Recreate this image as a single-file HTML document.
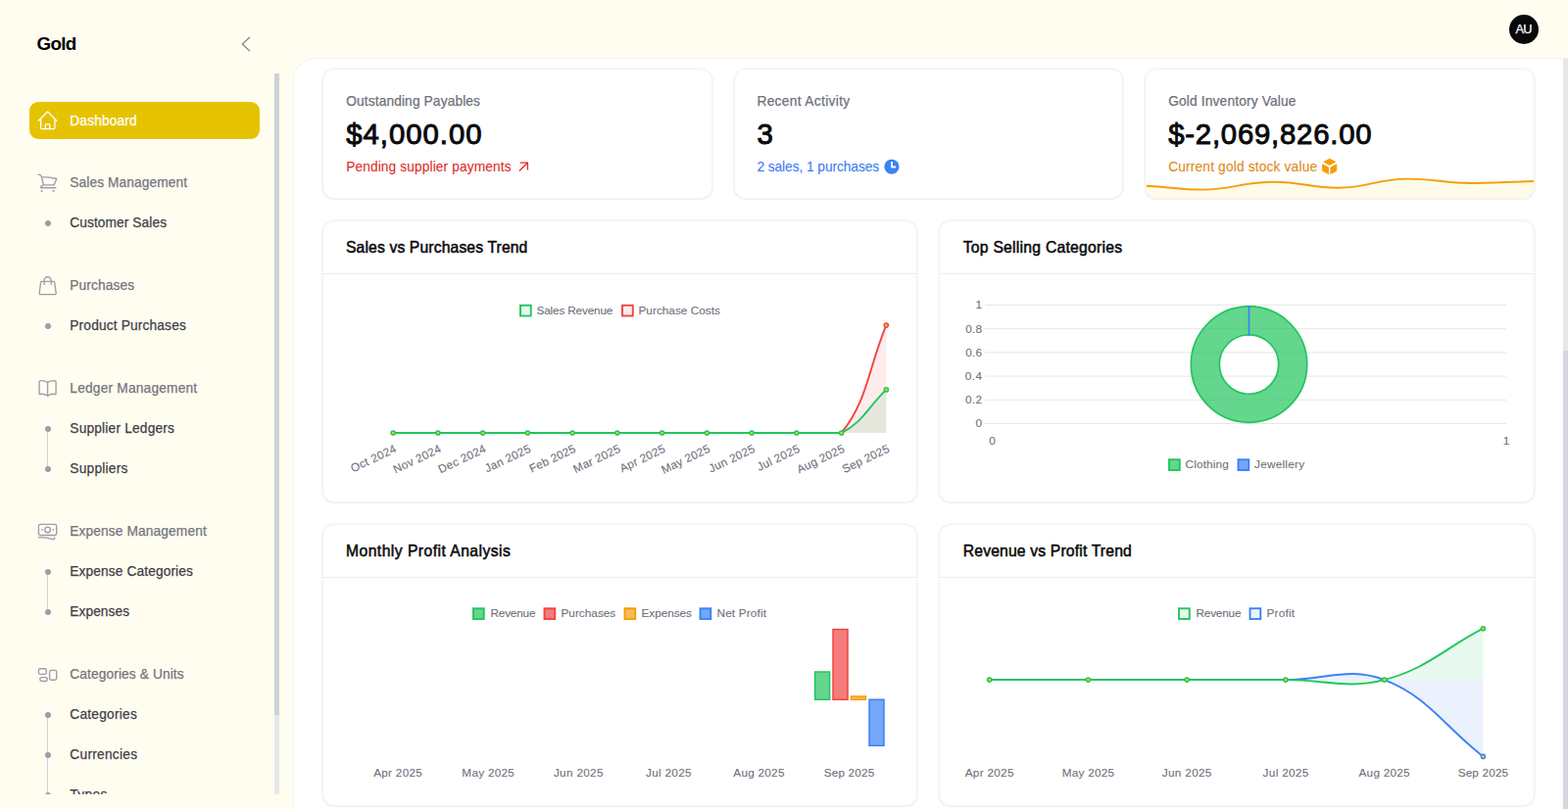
<!DOCTYPE html>
<html lang="en"><head><meta charset="utf-8"><title>Gold - Dashboard</title><style>
*{box-sizing:border-box;margin:0;padding:0}
html,body{width:1600px;height:826px;overflow:hidden}
body{background:#fffdf0;font-family:"Liberation Sans", sans-serif;position:relative;-webkit-font-smoothing:antialiased}
.t{position:absolute;white-space:nowrap;display:block;line-height:1}
.t i{display:inline-block;width:0;height:40px}
.abs{position:absolute}
.sidebar{position:absolute;left:0;top:0;width:299px;height:826px;overflow:hidden}
.active{position:absolute;left:30px;top:104px;width:235px;height:38px;border-radius:9px;background:#e6c300;box-shadow:0 0 0 1px rgba(255,255,255,0.85)}
.dot{position:absolute;width:6px;height:6px;border-radius:50%;background:#9c9dab;left:45.5px}
.vline{position:absolute;width:1px;background:#cfd0d9;left:48px}
.track{position:absolute;left:280px;top:75px;width:4.5px;height:736px;background:#e5e7eb}
.thumb{position:absolute;left:280px;top:75px;width:4.5px;height:655px;background:#cdd1d9}
.main{position:absolute;left:299px;top:59px;width:1301px;height:768px;background:#fff;border-top-left-radius:23px;border:1px solid #f3f3ee;border-right:0;border-bottom:0;overflow:hidden}
.mtrack{position:absolute;left:1595px;top:60px;width:5px;height:766px;background:#e5e7eb}
.mthumb{position:absolute;left:1595px;top:358px;width:5px;height:468px;background:#d4d7de}
.card{position:absolute;background:#fff;border:1px solid #f8f5df;border-radius:12px;box-shadow:0 0 0 1px rgba(30,30,70,0.03),0 1px 2px rgba(40,40,80,0.045);overflow:hidden}
.hr{position:absolute;left:0;right:0;height:1px;background:#ececec}
.avatar{position:absolute;left:1540px;top:15px;width:30px;height:30px;border-radius:50%;background:#09090b}
svg{position:absolute;overflow:visible}
svg text{font-family:"Liberation Sans", sans-serif}
</style></head><body>
<aside class="sidebar">
<span class="t" id="t1" style="top:11.30px;font-size:18.81px;font-weight:700;color:#000;letter-spacing:-0.677px;left:37.5px;"><i></i>Gold</span>
<svg style="left:244px;top:36px" width="14" height="18" viewBox="0 0 14 18"><path d="M10.6 2.2 L3.2 9 L10.6 15.8" fill="none" stroke="#85858f" stroke-width="1.3" stroke-linecap="round" stroke-linejoin="round"/></svg>
<div class="track"></div><div class="thumb"></div>
<div class="active"></div>
<svg style="left:38px;top:113px" width="21" height="21" viewBox="0 0 21 21"><g transform="translate(0.5 0.30)" fill="none" stroke="#fff" stroke-width="1.35" stroke-linecap="round" stroke-linejoin="round"><path d="M0.9 9.9 L10.1 0.8 L19.3 9.9"/><path d="M3.1 8 V17 Q3.1 18.3 4.4 18.3 H16.1 Q17.4 18.3 17.4 17 V8"/><path d="M7.8 18.3 V14.4 Q7.8 13.6 8.6 13.6 H11.5 Q12.3 13.6 12.3 14.4 V18.3"/></g></svg>
<span class="t" id="t2" style="top:88.00px;font-size:13.72px;font-weight:400;color:#fff;letter-spacing:0.156px;-webkit-text-stroke:0.25px;left:71.3px;"><i></i>Dashboard</span>
<nav class="abs" style="left:0;top:75px;width:279px;height:736px;overflow:hidden"><div class="abs" style="left:0;top:-75px;width:279px;height:900px">
<svg style="left:38px;top:177px" width="21" height="21" viewBox="0 0 21 21"><g transform="translate(0.5 0.30)" fill="none" stroke="#9c9dab" stroke-width="1.35" stroke-linecap="round" stroke-linejoin="round"><path d="M0.6 1.1 H1.8 Q3.3 1.1 3.7 2.6 L5.9 11.6 H16.6 L19.3 5.2 Q12 3.4 4.1 3.3"/><path d="M5.9 11.6 Q3.2 12.4 2.9 14.4 H18.4"/><circle cx="4.1" cy="17.7" r="1.1" fill="#9c9dab" stroke="none"/><circle cx="16" cy="17.7" r="1.1" fill="#9c9dab" stroke="none"/></g></svg>
<span class="t" id="t3" style="top:151.00px;font-size:13.72px;font-weight:400;color:#74757f;letter-spacing:0.101px;-webkit-text-stroke:0.25px;left:71.3px;"><i></i>Sales Management</span>
<div class="dot" style="top:225.3px"></div>
<span class="t" id="t4" style="top:192.00px;font-size:13.72px;font-weight:400;color:#3e3f48;letter-spacing:0.085px;-webkit-text-stroke:0.25px;left:71.3px;"><i></i>Customer Sales</span>
<svg style="left:38px;top:282px" width="21" height="21" viewBox="0 0 21 21"><g transform="translate(0.5 0.30)" fill="none" stroke="#9c9dab" stroke-width="1.35" stroke-linecap="round" stroke-linejoin="round"><path d="M4 5.05 H16.2 Q17 5.05 17.1 5.9 L18.7 16.8 Q18.9 18.4 17.3 18.4 H3.1 Q1.5 18.4 1.7 16.8 L3.1 5.9 Q3.2 5.05 4 5.05 Z"/><path d="M6.6 8.3 V4 A3.55 3.55 0 0 1 13.7 4 V8.3"/></g></svg>
<span class="t" id="t5" style="top:256.00px;font-size:13.72px;font-weight:400;color:#74757f;letter-spacing:0.127px;-webkit-text-stroke:0.25px;left:71.3px;"><i></i>Purchases</span>
<div class="dot" style="top:330.3px"></div>
<span class="t" id="t6" style="top:297.00px;font-size:13.72px;font-weight:400;color:#3e3f48;letter-spacing:0.162px;-webkit-text-stroke:0.25px;left:71.3px;"><i></i>Product Purchases</span>
<svg style="left:38px;top:387px" width="21" height="21" viewBox="0 0 21 21"><g transform="translate(0.5 0.30)" fill="none" stroke="#9c9dab" stroke-width="1.35" stroke-linecap="round" stroke-linejoin="round"><path d="M10.1 3.2 Q6 0.6 2.4 1.6 Q1.6 1.8 1.6 2.6 V14.4 Q1.6 15.4 2.6 15.2 Q6.4 14.2 10.1 17 Q13.8 14.2 17.6 15.2 Q18.6 15.4 18.6 14.4 V2.6 Q18.6 1.8 17.8 1.6 Q14.2 0.6 10.1 3.2 Z"/><path d="M10.1 3.2 V17"/></g></svg>
<span class="t" id="t7" style="top:361.00px;font-size:13.72px;font-weight:400;color:#74757f;letter-spacing:0.203px;-webkit-text-stroke:0.25px;left:71.3px;"><i></i>Ledger Management</span>
<div class="vline" style="top:438.3px;height:41.0px"></div>
<div class="dot" style="top:435.3px"></div>
<span class="t" id="t8" style="top:402.00px;font-size:13.72px;font-weight:400;color:#3e3f48;letter-spacing:0.192px;-webkit-text-stroke:0.25px;left:71.3px;"><i></i>Supplier Ledgers</span>
<div class="dot" style="top:476.3px"></div>
<span class="t" id="t9" style="top:443.00px;font-size:13.72px;font-weight:400;color:#3e3f48;letter-spacing:0.225px;-webkit-text-stroke:0.25px;left:71.3px;"><i></i>Suppliers</span>
<svg style="left:38px;top:533px" width="21" height="21" viewBox="0 0 21 21"><g transform="translate(0.5 0.30)" fill="none" stroke="#9c9dab" stroke-width="1.35" stroke-linecap="round" stroke-linejoin="round"><rect x="0.95" y="2.05" width="18.25" height="11.15" rx="1.8"/><circle cx="10.08" cy="7.7" r="2.8"/><path d="M4.1 7.7 H4.7 M15.4 7.7 H16"/><path d="M0.9 15.4 Q9 15.2 15.6 17.3 Q17.2 17.8 17.2 15.6"/></g></svg>
<span class="t" id="t10" style="top:507.00px;font-size:13.72px;font-weight:400;color:#74757f;letter-spacing:0.126px;-webkit-text-stroke:0.25px;left:71.3px;"><i></i>Expense Management</span>
<div class="vline" style="top:584.3px;height:41.0px"></div>
<div class="dot" style="top:581.3px"></div>
<span class="t" id="t11" style="top:548.00px;font-size:13.72px;font-weight:400;color:#3e3f48;letter-spacing:0.120px;-webkit-text-stroke:0.25px;left:71.3px;"><i></i>Expense Categories</span>
<div class="dot" style="top:622.3px"></div>
<span class="t" id="t12" style="top:589.00px;font-size:13.72px;font-weight:400;color:#3e3f48;letter-spacing:0.069px;-webkit-text-stroke:0.25px;left:71.3px;"><i></i>Expenses</span>
<svg style="left:38px;top:679px" width="21" height="21" viewBox="0 0 21 21"><g transform="translate(0.5 0.30)" fill="none" stroke="#9c9dab" stroke-width="1.35" stroke-linecap="round" stroke-linejoin="round"><rect x="0.95" y="3.47" width="7.85" height="5.67" rx="1.7"/><rect x="2.36" y="12.3" width="7.4" height="3.9" rx="1.7"/><rect x="12.1" y="5.04" width="7.1" height="9.9" rx="1.7"/></g></svg>
<span class="t" id="t13" style="top:653.00px;font-size:13.72px;font-weight:400;color:#74757f;letter-spacing:0.113px;-webkit-text-stroke:0.25px;left:71.3px;"><i></i>Categories &amp; Units</span>
<div class="vline" style="top:730.3px;height:82.0px"></div>
<div class="dot" style="top:727.3px"></div>
<span class="t" id="t14" style="top:694.00px;font-size:13.72px;font-weight:400;color:#3e3f48;letter-spacing:0.233px;-webkit-text-stroke:0.25px;left:71.3px;"><i></i>Categories</span>
<div class="dot" style="top:768.3px"></div>
<span class="t" id="t15" style="top:735.00px;font-size:13.72px;font-weight:400;color:#3e3f48;letter-spacing:0.271px;-webkit-text-stroke:0.25px;left:71.3px;"><i></i>Currencies</span>
<div class="dot" style="top:809.3px"></div>
<span class="t" id="t16" style="top:776.00px;font-size:13.72px;font-weight:400;color:#3e3f48;letter-spacing:0.387px;-webkit-text-stroke:0.25px;left:71.3px;"><i></i>Types</span>
</div></nav>
</aside>
<header><div class="avatar"></div>
<span class="t" id="t17" style="top:-6.00px;font-size:12.75px;font-weight:400;color:#fff;letter-spacing:-0.804px;-webkit-text-stroke:0.25px;left:1555px;transform:translateX(-50%);margin-left:-0.402px;"><i></i>AU</span>
</header>
<main class="main"></main><div class="mtrack"></div><div class="mthumb"></div>
<section class="card" style="left:328.50px;top:70px;width:398.33px;height:133px"></section>
<section class="card" style="left:749.00px;top:70px;width:397.20px;height:133px"></section>
<section class="card" style="left:1168.17px;top:70px;width:397.83px;height:133px"><svg style="left:0;top:0" width="398" height="134" viewBox="0 0 398 134"><path d="M0.7 118.7 C26.2 119.9 31.8 122.6 57.3 122.6 C90.3 122.6 97.7 114.7 130.7 114.7 C160.3 114.7 166.8 120.8 196.4 120.8 C228.3 120.8 235.4 111.6 267.3 111.6 C296.7 111.6 303.3 116.0 332.7 116 C361.4 116.0 367.8 114.6 396.5 114 V134 H0 Z" fill="#fefbe9"/><path d="M0.7 118.7 C26.2 119.9 31.8 122.6 57.3 122.6 C90.3 122.6 97.7 114.7 130.7 114.7 C160.3 114.7 166.8 120.8 196.4 120.8 C228.3 120.8 235.4 111.6 267.3 111.6 C296.7 111.6 303.3 116.0 332.7 116 C361.4 116.0 367.8 114.6 396.5 114" fill="none" stroke="#f59e0b" stroke-width="1.9"/></svg></section>
<span class="t" id="t18" style="top:68.00px;font-size:13.72px;font-weight:400;color:#70717c;letter-spacing:0.134px;-webkit-text-stroke:0.25px;left:353.2px;"><i></i>Outstanding Payables</span>
<span class="t" id="t19" style="top:107.00px;font-size:29.26px;font-weight:400;color:#09090b;letter-spacing:1.020px;-webkit-text-stroke:0.95px;left:353.2px;"><i></i>$4,000.00</span>
<span class="t" id="t20" style="top:135.00px;font-size:13.72px;font-weight:400;color:#e02d2d;letter-spacing:0.119px;-webkit-text-stroke:0.1px;left:353.2px;"><i></i>Pending supplier payments</span>
<span class="t" id="t21" style="top:68.00px;font-size:13.72px;font-weight:400;color:#70717c;letter-spacing:0.342px;-webkit-text-stroke:0.25px;left:772.4px;"><i></i>Recent Activity</span>
<span class="t" id="t22" style="top:107.00px;font-size:29.26px;font-weight:400;color:#09090b;-webkit-text-stroke:0.95px;left:772.4px;"><i></i>3</span>
<span class="t" id="t23" style="top:135.00px;font-size:13.72px;font-weight:400;color:#3b7cf2;letter-spacing:-0.056px;-webkit-text-stroke:0.1px;left:772.4px;"><i></i>2 sales, 1 purchases</span>
<span class="t" id="t24" style="top:68.00px;font-size:13.72px;font-weight:400;color:#70717c;letter-spacing:0.164px;-webkit-text-stroke:0.25px;left:1192.2px;"><i></i>Gold Inventory Value</span>
<span class="t" id="t25" style="top:107.00px;font-size:29.26px;font-weight:400;color:#09090b;letter-spacing:0.808px;-webkit-text-stroke:0.95px;left:1192.2px;"><i></i>$-2,069,826.00</span>
<span class="t" id="t26" style="top:135.00px;font-size:13.72px;font-weight:400;color:#e2881a;letter-spacing:0.172px;-webkit-text-stroke:0.1px;left:1192.2px;"><i></i>Current gold stock value</span>
<svg style="left:528px;top:164px" width="12" height="12" viewBox="0 0 12 12"><path d="M1.9 10.6 L10.3 2.3 M2.6 2.1 H10.4 V9.5" fill="none" stroke="#e5282d" stroke-width="1.35" stroke-linecap="butt" stroke-linejoin="miter"/></svg>
<svg style="left:902px;top:162px" width="16" height="17" viewBox="0 0 16 17"><circle cx="7.9" cy="8.2" r="7.55" fill="#3b82f6"/><path d="M8 3 V8.5 H12.1" fill="none" stroke="#fff" stroke-width="1.8" stroke-linecap="butt" stroke-linejoin="miter"/></svg>
<svg style="left:1348px;top:161px" width="17" height="18" viewBox="0 0 17 18"><g fill="#f59e0b" transform="translate(0.9 0.7)"><path d="M1.1 3.6 L7.8 0 L14.5 3.6 L7.8 7.3 Z"/><path d="M0.2 5.5 L7.1 9.1 V16.6 L0.2 12.9 Z"/><path d="M8.5 9.1 L15.3 5.5 V12.9 L8.5 16.6 Z"/></g></svg>
<section class="card" style="left:328.50px;top:225px;width:607.75px;height:288px"><div class="hr" style="top:53px"></div></section>
<span class="t" id="t27" style="top:218.00px;font-size:15.67px;font-weight:400;color:#09090b;letter-spacing:0.150px;-webkit-text-stroke:0.51px;left:353.0px;"><i></i>Sales vs Purchases Trend</span>
<section class="card" style="left:958.25px;top:225px;width:607.75px;height:288px"><div class="hr" style="top:53px"></div></section>
<span class="t" id="t28" style="top:218.00px;font-size:15.67px;font-weight:400;color:#09090b;letter-spacing:0.268px;-webkit-text-stroke:0.51px;left:982.75px;"><i></i>Top Selling Categories</span>
<section class="card" style="left:328.50px;top:535px;width:607.75px;height:288px"><div class="hr" style="top:53px"></div></section>
<span class="t" id="t29" style="top:528.00px;font-size:15.67px;font-weight:400;color:#09090b;letter-spacing:0.469px;-webkit-text-stroke:0.51px;left:353.0px;"><i></i>Monthly Profit Analysis</span>
<section class="card" style="left:958.25px;top:535px;width:607.75px;height:288px"><div class="hr" style="top:53px"></div></section>
<span class="t" id="t30" style="top:528.00px;font-size:15.67px;font-weight:400;color:#09090b;letter-spacing:0.184px;-webkit-text-stroke:0.51px;left:982.75px;"><i></i>Revenue vs Profit Trend</span>
<svg style="left:0;top:0" width="1600" height="826" viewBox="0 0 1600 826">
<path d="M401.20 441.95 C419.49 441.95 428.64 441.95 446.94 441.95 C465.23 441.95 474.38 441.95 492.67 441.95 C510.97 441.95 520.11 441.95 538.41 441.95 C556.70 441.95 565.85 441.95 584.15 441.95 C602.44 441.95 611.59 441.95 629.88 441.95 C648.18 441.95 657.32 441.95 675.62 441.95 C693.91 441.95 703.06 441.95 721.35 441.95 C739.65 441.95 748.80 441.95 767.09 441.95 C785.39 441.95 794.53 441.95 812.83 441.95 C831.12 441.95 848.40 441.95 858.56 441.95 C884.99 410.21 886.01 376.04 904.30 332.10 V441.95 H401.20 Z" fill="rgba(239,68,68,0.1)"/>
<path d="M401.20 441.95 C419.49 441.95 428.64 441.95 446.94 441.95 C465.23 441.95 474.38 441.95 492.67 441.95 C510.97 441.95 520.11 441.95 538.41 441.95 C556.70 441.95 565.85 441.95 584.15 441.95 C602.44 441.95 611.59 441.95 629.88 441.95 C648.18 441.95 657.32 441.95 675.62 441.95 C693.91 441.95 703.06 441.95 721.35 441.95 C739.65 441.95 748.80 441.95 767.09 441.95 C785.39 441.95 794.53 441.95 812.83 441.95 C831.12 441.95 843.24 441.95 858.56 441.95 C879.83 431.71 886.01 415.52 904.30 397.90 V441.95 H401.20 Z" fill="rgba(34,197,94,0.1)"/>
<path d="M401.20 441.95 C419.49 441.95 428.64 441.95 446.94 441.95 C465.23 441.95 474.38 441.95 492.67 441.95 C510.97 441.95 520.11 441.95 538.41 441.95 C556.70 441.95 565.85 441.95 584.15 441.95 C602.44 441.95 611.59 441.95 629.88 441.95 C648.18 441.95 657.32 441.95 675.62 441.95 C693.91 441.95 703.06 441.95 721.35 441.95 C739.65 441.95 748.80 441.95 767.09 441.95 C785.39 441.95 794.53 441.95 812.83 441.95 C831.12 441.95 848.40 441.95 858.56 441.95 C884.99 410.21 886.01 376.04 904.30 332.10" fill="none" stroke="#ef4444" stroke-width="1.9"/>
<path d="M401.20 441.95 C419.49 441.95 428.64 441.95 446.94 441.95 C465.23 441.95 474.38 441.95 492.67 441.95 C510.97 441.95 520.11 441.95 538.41 441.95 C556.70 441.95 565.85 441.95 584.15 441.95 C602.44 441.95 611.59 441.95 629.88 441.95 C648.18 441.95 657.32 441.95 675.62 441.95 C693.91 441.95 703.06 441.95 721.35 441.95 C739.65 441.95 748.80 441.95 767.09 441.95 C785.39 441.95 794.53 441.95 812.83 441.95 C831.12 441.95 843.24 441.95 858.56 441.95 C879.83 431.71 886.01 415.52 904.30 397.90" fill="none" stroke="#22c55e" stroke-width="1.9"/>
<circle cx="904.30" cy="332.10" r="2.05" fill="#f2d40c" stroke="#ef4444" stroke-width="1.5"/>
<circle cx="401.20" cy="441.95" r="2.05" fill="#f2d40c" stroke="#22c55e" stroke-width="1.5"/>
<circle cx="446.94" cy="441.95" r="2.05" fill="#f2d40c" stroke="#22c55e" stroke-width="1.5"/>
<circle cx="492.67" cy="441.95" r="2.05" fill="#f2d40c" stroke="#22c55e" stroke-width="1.5"/>
<circle cx="538.41" cy="441.95" r="2.05" fill="#f2d40c" stroke="#22c55e" stroke-width="1.5"/>
<circle cx="584.15" cy="441.95" r="2.05" fill="#f2d40c" stroke="#22c55e" stroke-width="1.5"/>
<circle cx="629.88" cy="441.95" r="2.05" fill="#f2d40c" stroke="#22c55e" stroke-width="1.5"/>
<circle cx="675.62" cy="441.95" r="2.05" fill="#f2d40c" stroke="#22c55e" stroke-width="1.5"/>
<circle cx="721.35" cy="441.95" r="2.05" fill="#f2d40c" stroke="#22c55e" stroke-width="1.5"/>
<circle cx="767.09" cy="441.95" r="2.05" fill="#f2d40c" stroke="#22c55e" stroke-width="1.5"/>
<circle cx="812.83" cy="441.95" r="2.05" fill="#f2d40c" stroke="#22c55e" stroke-width="1.5"/>
<circle cx="858.56" cy="441.95" r="2.05" fill="#f2d40c" stroke="#22c55e" stroke-width="1.5"/>
<circle cx="904.30" cy="397.90" r="2.05" fill="#f2d40c" stroke="#22c55e" stroke-width="1.5"/>
<rect x="531.0" y="311.75" width="10.75" height="10.75" fill="rgba(34,197,94,0.1)" stroke="#22c55e" stroke-width="1.9"/>
<text class="st" id="t31" x="547.5" y="320.5" font-size="11.76" fill="#6e6f7a" text-anchor="start" letter-spacing="-0.154" stroke="#6e6f7a" stroke-width="0.1">Sales Revenue</text>
<rect x="635.0" y="311.75" width="10.75" height="10.75" fill="rgba(239,68,68,0.1)" stroke="#ef4444" stroke-width="1.9"/>
<text class="st" id="t32" x="651.5" y="320.5" font-size="11.76" fill="#6e6f7a" text-anchor="start" letter-spacing="0.031" stroke="#6e6f7a" stroke-width="0.1">Purchase Costs</text>
<text class="st" id="t33" x="405.50" y="461" font-size="11.76" fill="#6e6f7a" text-anchor="end" letter-spacing="0.301" transform="rotate(-25.5 405.2 461)" stroke="#6e6f7a" stroke-width="0.1">Oct 2024</text>
<text class="st" id="t34" x="451.20" y="461" font-size="11.76" fill="#6e6f7a" text-anchor="end" letter-spacing="0.299" transform="rotate(-25.5 450.9 461)" stroke="#6e6f7a" stroke-width="0.1">Nov 2024</text>
<text class="st" id="t35" x="496.97" y="461" font-size="11.76" fill="#6e6f7a" text-anchor="end" letter-spacing="0.268" transform="rotate(-25.5 496.7 461)" stroke="#6e6f7a" stroke-width="0.1">Dec 2024</text>
<text class="st" id="t36" x="542.67" y="461" font-size="11.76" fill="#6e6f7a" text-anchor="end" letter-spacing="0.266" transform="rotate(-25.5 542.4 461)" stroke="#6e6f7a" stroke-width="0.1">Jan 2025</text>
<text class="st" id="t37" x="588.22" y="461" font-size="11.76" fill="#6e6f7a" text-anchor="end" letter-spacing="0.116" transform="rotate(-25.5 588.1 461)" stroke="#6e6f7a" stroke-width="0.1">Feb 2025</text>
<text class="st" id="t38" x="634.17" y="461" font-size="11.76" fill="#6e6f7a" text-anchor="end" letter-spacing="0.272" transform="rotate(-25.5 633.9 461)" stroke="#6e6f7a" stroke-width="0.1">Mar 2025</text>
<text class="st" id="t39" x="679.89" y="461" font-size="11.76" fill="#6e6f7a" text-anchor="end" letter-spacing="0.288" transform="rotate(-25.5 679.6 461)" stroke="#6e6f7a" stroke-width="0.1">Apr 2025</text>
<text class="st" id="t40" x="725.67" y="461" font-size="11.76" fill="#6e6f7a" text-anchor="end" letter-spacing="0.266" transform="rotate(-25.5 725.4 461)" stroke="#6e6f7a" stroke-width="0.1">May 2025</text>
<text class="st" id="t41" x="771.41" y="461" font-size="11.76" fill="#6e6f7a" text-anchor="end" letter-spacing="0.312" transform="rotate(-25.5 771.1 461)" stroke="#6e6f7a" stroke-width="0.1">Jun 2025</text>
<text class="st" id="t42" x="817.11" y="461" font-size="11.76" fill="#6e6f7a" text-anchor="end" letter-spacing="0.312" transform="rotate(-25.5 816.8 461)" stroke="#6e6f7a" stroke-width="0.1">Jul 2025</text>
<text class="st" id="t43" x="862.86" y="461" font-size="11.76" fill="#6e6f7a" text-anchor="end" letter-spacing="0.261" transform="rotate(-25.5 862.6 461)" stroke="#6e6f7a" stroke-width="0.1">Aug 2025</text>
<text class="st" id="t44" x="908.47" y="461" font-size="11.76" fill="#6e6f7a" text-anchor="end" letter-spacing="0.170" transform="rotate(-25.5 908.3 461)" stroke="#6e6f7a" stroke-width="0.1">Sep 2025</text>
<path d="M1005 311.5 H1537" stroke="#e6e6e6" stroke-width="1"/>
<text class="st" id="t45" x="1002" y="315.3" font-size="11.76" fill="#6e6f7a" text-anchor="end" stroke="#6e6f7a" stroke-width="0.1">1</text>
<path d="M1005 335.7 H1537" stroke="#e6e6e6" stroke-width="1"/>
<text class="st" id="t46" x="1002.21" y="339.5" font-size="11.76" fill="#6e6f7a" text-anchor="end" letter-spacing="0.211" stroke="#6e6f7a" stroke-width="0.1">0.8</text>
<path d="M1005 359.9 H1537" stroke="#e6e6e6" stroke-width="1"/>
<text class="st" id="t47" x="1002.20" y="363.7" font-size="11.76" fill="#6e6f7a" text-anchor="end" letter-spacing="0.203" stroke="#6e6f7a" stroke-width="0.1">0.6</text>
<path d="M1005 384.1 H1537" stroke="#e6e6e6" stroke-width="1"/>
<text class="st" id="t48" x="1002.49" y="387.9" font-size="11.76" fill="#6e6f7a" text-anchor="end" letter-spacing="0.492" stroke="#6e6f7a" stroke-width="0.1">0.4</text>
<path d="M1005 408.3 H1537" stroke="#e6e6e6" stroke-width="1"/>
<text class="st" id="t49" x="1002.29" y="412.1" font-size="11.76" fill="#6e6f7a" text-anchor="end" letter-spacing="0.289" stroke="#6e6f7a" stroke-width="0.1">0.2</text>
<path d="M1005 432.5 H1537" stroke="#e6e6e6" stroke-width="1"/>
<text class="st" id="t50" x="1002" y="436.3" font-size="11.76" fill="#6e6f7a" text-anchor="end" stroke="#6e6f7a" stroke-width="0.1">0</text>
<text class="st" id="t51" x="1012.5" y="453.5" font-size="11.76" fill="#6e6f7a" text-anchor="middle" stroke="#6e6f7a" stroke-width="0.1">0</text>
<text class="st" id="t52" x="1537" y="453.5" font-size="11.76" fill="#6e6f7a" text-anchor="middle" stroke="#6e6f7a" stroke-width="0.1">1</text>
<circle cx="1274.5" cy="372.1" r="44.8" fill="none" stroke="rgba(34,197,94,0.7)" stroke-width="29.4"/>
<circle cx="1274.5" cy="372.1" r="59.2" fill="none" stroke="#22c55e" stroke-width="1.7"/><circle cx="1274.5" cy="372.1" r="30.2" fill="none" stroke="#22c55e" stroke-width="1.7"/>
<path d="M1274.5 312 V342.6" stroke="#3b82f6" stroke-width="1.7"/>
<rect x="1193.0" y="469.25" width="10.75" height="10.75" fill="rgba(34,197,94,0.7)" stroke="#22c55e" stroke-width="1.9"/>
<text class="st" id="t53" x="1209.5" y="478" font-size="11.76" fill="#6e6f7a" text-anchor="start" letter-spacing="0.167" stroke="#6e6f7a" stroke-width="0.1">Clothing</text>
<rect x="1263.5" y="469.25" width="10.75" height="10.75" fill="rgba(59,130,246,0.7)" stroke="#3b82f6" stroke-width="1.9"/>
<text class="st" id="t54" x="1280" y="478" font-size="11.76" fill="#6e6f7a" text-anchor="start" letter-spacing="0.264" stroke="#6e6f7a" stroke-width="0.1">Jewellery</text>
<rect x="483.0" y="621.25" width="10.75" height="10.75" fill="rgba(34,197,94,0.7)" stroke="#22c55e" stroke-width="1.9"/>
<text class="st" id="t55" x="500.5" y="630.2" font-size="11.76" fill="#6e6f7a" text-anchor="start" letter-spacing="-0.185" stroke="#6e6f7a" stroke-width="0.1">Revenue</text>
<rect x="555.5" y="621.25" width="10.75" height="10.75" fill="rgba(239,68,68,0.7)" stroke="#ef4444" stroke-width="1.9"/>
<text class="st" id="t56" x="572.5" y="630.2" font-size="11.76" fill="#6e6f7a" text-anchor="start" letter-spacing="0.025" stroke="#6e6f7a" stroke-width="0.1">Purchases</text>
<rect x="637.5" y="621.25" width="10.75" height="10.75" fill="rgba(245,158,11,0.7)" stroke="#f59e0b" stroke-width="1.9"/>
<text class="st" id="t57" x="654.5" y="630.2" font-size="11.76" fill="#6e6f7a" text-anchor="start" letter-spacing="-0.025" stroke="#6e6f7a" stroke-width="0.1">Expenses</text>
<rect x="714.5" y="621.25" width="10.75" height="10.75" fill="rgba(59,130,246,0.7)" stroke="#3b82f6" stroke-width="1.9"/>
<text class="st" id="t58" x="731.5" y="630.2" font-size="11.76" fill="#6e6f7a" text-anchor="start" letter-spacing="0.161" stroke="#6e6f7a" stroke-width="0.1">Net Profit</text>
<rect x="831.6" y="686" width="15" height="28.30" fill="rgba(34,197,94,0.7)" stroke="#22c55e" stroke-width="1.5"/>
<rect x="850" y="642.6" width="15" height="71.70" fill="rgba(239,68,68,0.7)" stroke="#ef4444" stroke-width="1.5"/>
<rect x="868.5" y="711" width="15" height="3.30" fill="rgba(245,158,11,0.7)" stroke="#f59e0b" stroke-width="1.5"/>
<rect x="887" y="714.3" width="15" height="47.00" fill="rgba(59,130,246,0.7)" stroke="#3b82f6" stroke-width="1.5"/>
<text class="st" id="t59" x="406.14" y="793" font-size="11.76" fill="#6e6f7a" text-anchor="middle" letter-spacing="0.288" stroke="#6e6f7a" stroke-width="0.1">Apr 2025</text>
<text class="st" id="t60" x="498.23" y="793" font-size="11.76" fill="#6e6f7a" text-anchor="middle" letter-spacing="0.266" stroke="#6e6f7a" stroke-width="0.1">May 2025</text>
<text class="st" id="t61" x="590.36" y="793" font-size="11.76" fill="#6e6f7a" text-anchor="middle" letter-spacing="0.312" stroke="#6e6f7a" stroke-width="0.1">Jun 2025</text>
<text class="st" id="t62" x="682.46" y="793" font-size="11.76" fill="#6e6f7a" text-anchor="middle" letter-spacing="0.312" stroke="#6e6f7a" stroke-width="0.1">Jul 2025</text>
<text class="st" id="t63" x="774.53" y="793" font-size="11.76" fill="#6e6f7a" text-anchor="middle" letter-spacing="0.261" stroke="#6e6f7a" stroke-width="0.1">Aug 2025</text>
<text class="st" id="t64" x="866.59" y="793" font-size="11.76" fill="#6e6f7a" text-anchor="middle" letter-spacing="0.170" stroke="#6e6f7a" stroke-width="0.1">Sep 2025</text>
<rect x="1203.0" y="621.25" width="10.75" height="10.75" fill="rgba(34,197,94,0.1)" stroke="#22c55e" stroke-width="1.9"/>
<text class="st" id="t65" x="1220.5" y="630.2" font-size="11.76" fill="#6e6f7a" text-anchor="start" letter-spacing="-0.185" stroke="#6e6f7a" stroke-width="0.1">Revenue</text>
<rect x="1275.5" y="621.25" width="10.75" height="10.75" fill="rgba(59,130,246,0.1)" stroke="#3b82f6" stroke-width="1.9"/>
<text class="st" id="t66" x="1292.5" y="630.2" font-size="11.76" fill="#6e6f7a" text-anchor="start" letter-spacing="0.225" stroke="#6e6f7a" stroke-width="0.1">Profit</text>
<path d="M1009.60 694.10 C1049.90 694.10 1070.06 694.10 1110.36 694.10 C1150.66 694.10 1170.82 694.10 1211.12 694.10 C1251.42 694.10 1271.58 694.10 1311.88 694.10 C1352.18 694.10 1377.07 680.28 1412.64 694.10 C1457.68 711.60 1473.10 741.08 1513.40 772.40 V694.1 H1009.60 Z" fill="rgba(59,130,246,0.1)"/>
<path d="M1009.60 694.10 C1049.90 694.10 1070.06 694.10 1110.36 694.10 C1150.66 694.10 1170.82 694.10 1211.12 694.10 C1251.42 694.10 1271.58 694.10 1311.88 694.10 C1352.18 694.10 1374.75 703.95 1412.64 694.10 C1455.35 682.99 1473.10 662.66 1513.40 641.70 V694.1 H1009.60 Z" fill="rgba(34,197,94,0.1)"/>
<path d="M1009.60 694.10 C1049.90 694.10 1070.06 694.10 1110.36 694.10 C1150.66 694.10 1170.82 694.10 1211.12 694.10 C1251.42 694.10 1271.58 694.10 1311.88 694.10 C1352.18 694.10 1377.07 680.28 1412.64 694.10 C1457.68 711.60 1473.10 741.08 1513.40 772.40" fill="none" stroke="#3b82f6" stroke-width="1.9"/>
<path d="M1009.60 694.10 C1049.90 694.10 1070.06 694.10 1110.36 694.10 C1150.66 694.10 1170.82 694.10 1211.12 694.10 C1251.42 694.10 1271.58 694.10 1311.88 694.10 C1352.18 694.10 1374.75 703.95 1412.64 694.10 C1455.35 682.99 1473.10 662.66 1513.40 641.70" fill="none" stroke="#22c55e" stroke-width="1.9"/>
<circle cx="1513.40" cy="772.40" r="2.05" fill="#f2d40c" stroke="#3b82f6" stroke-width="1.5"/>
<circle cx="1009.60" cy="694.10" r="2.05" fill="#f2d40c" stroke="#22c55e" stroke-width="1.5"/>
<circle cx="1110.36" cy="694.10" r="2.05" fill="#f2d40c" stroke="#22c55e" stroke-width="1.5"/>
<circle cx="1211.12" cy="694.10" r="2.05" fill="#f2d40c" stroke="#22c55e" stroke-width="1.5"/>
<circle cx="1311.88" cy="694.10" r="2.05" fill="#f2d40c" stroke="#22c55e" stroke-width="1.5"/>
<circle cx="1412.64" cy="694.10" r="2.05" fill="#f2d40c" stroke="#22c55e" stroke-width="1.5"/>
<circle cx="1513.40" cy="641.70" r="2.05" fill="#f2d40c" stroke="#22c55e" stroke-width="1.5"/>
<text class="st" id="t67" x="1009.74" y="793" font-size="11.76" fill="#6e6f7a" text-anchor="middle" letter-spacing="0.288" stroke="#6e6f7a" stroke-width="0.1">Apr 2025</text>
<text class="st" id="t68" x="1110.53" y="793" font-size="11.76" fill="#6e6f7a" text-anchor="middle" letter-spacing="0.266" stroke="#6e6f7a" stroke-width="0.1">May 2025</text>
<text class="st" id="t69" x="1211.26" y="793" font-size="11.76" fill="#6e6f7a" text-anchor="middle" letter-spacing="0.312" stroke="#6e6f7a" stroke-width="0.1">Jun 2025</text>
<text class="st" id="t70" x="1312.06" y="793" font-size="11.76" fill="#6e6f7a" text-anchor="middle" letter-spacing="0.312" stroke="#6e6f7a" stroke-width="0.1">Jul 2025</text>
<text class="st" id="t71" x="1412.73" y="793" font-size="11.76" fill="#6e6f7a" text-anchor="middle" letter-spacing="0.261" stroke="#6e6f7a" stroke-width="0.1">Aug 2025</text>
<text class="st" id="t72" x="1513.49" y="793" font-size="11.76" fill="#6e6f7a" text-anchor="middle" letter-spacing="0.170" stroke="#6e6f7a" stroke-width="0.1">Sep 2025</text>
</svg>
</body></html>
